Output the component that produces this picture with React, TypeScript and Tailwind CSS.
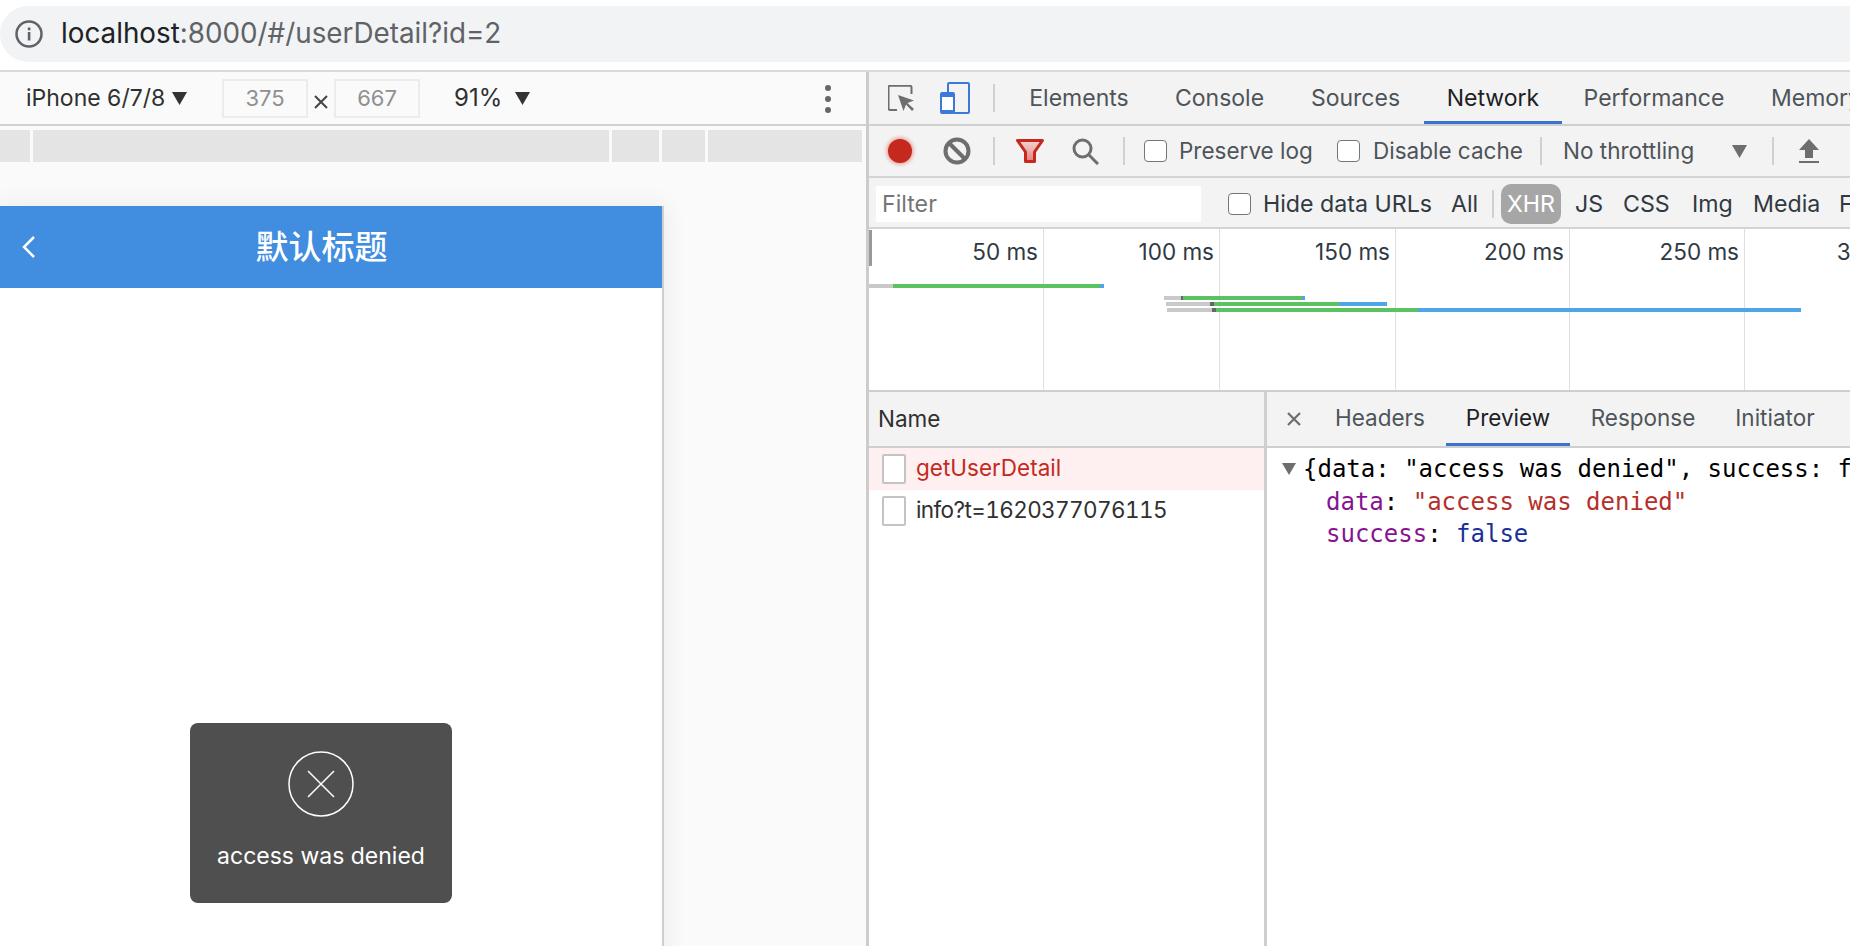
const tabs = [
  { label: "Elements", width: "w-[146px]" },
  { label: "Console", width: "w-[135px]" },
  { label: "Sources", width: "w-[137px]" },
  { label: "Network", width: "w-[138px]", active: true },
  { label: "Performance", width: "w-[184px]" },
  { label: "Memory", width: "w-[140px]" },
];

const detailTabs = [
  { label: "Headers", width: "w-[132px]" },
  { label: "Preview", width: "w-[124px]", active: true },
  { label: "Response", width: "w-[146px]" },
  { label: "Initiator", width: "w-[118px]" },
];

const ticks = [
  { label: "50 ms", width: "w-[175px]" },
  { label: "100 ms", width: "w-[176px]" },
  { label: "150 ms", width: "w-[176px]" },
  { label: "200 ms", width: "w-[174px]" },
  { label: "250 ms", width: "w-[175px]" },
  { label: "300 ms", width: "w-[178px]" },
];

function Sep() {
  return <div className="h-[28px] w-[2px] shrink-0 bg-[#d0d0d0]" />;
}

function Check({ className }: { className: string }) {
  return (
    <div
      className={`h-[22px] w-[23px] shrink-0 rounded-[4px] border-[1.5px] border-[#767676] bg-white ${className}`}
    />
  );
}

function Caret({ className }: { className: string }) {
  return (
    <svg className={`shrink-0 ${className}`} width="15" height="13" viewBox="0 0 15 13">
      <path d="M0 0h15L7.500 13z" fill="currentColor" />
    </svg>
  );
}

function FileIcon() {
  return <div className="h-[30px] w-[24px] shrink-0 rounded-[2px] border-2 border-[#c4c4c4] bg-white" />;
}

function Waterfall() {
  return (
    <svg className="absolute left-0 top-0" width="981" height="161" viewBox="869 229 981 161">
      <rect x="869" y="230" width="3" height="36" fill="#999999" />
      <rect x="869" y="284" width="24" height="4" fill="#c9c9c9" />
      <rect x="893" y="284" width="207" height="4" fill="#5cc160" />
      <rect x="1100" y="284" width="4" height="4" fill="#4ea6e8" />
      <rect x="1164" y="296" width="17" height="4" fill="#c9c9c9" />
      <rect x="1181" y="296" width="2" height="4" fill="#666666" />
      <rect x="1183" y="296" width="119" height="4" fill="#5cc160" />
      <rect x="1302" y="296" width="3" height="4" fill="#4ea6e8" />
      <rect x="1166" y="302" width="44" height="4" fill="#c9c9c9" />
      <rect x="1210" y="302" width="4" height="4" fill="#666666" />
      <rect x="1214" y="302" width="125" height="4" fill="#5cc160" />
      <rect x="1339" y="302" width="48" height="4" fill="#4ea6e8" />
      <rect x="1167" y="308" width="45" height="4" fill="#c9c9c9" />
      <rect x="1212" y="308" width="4" height="4" fill="#666666" />
      <rect x="1216" y="308" width="202" height="4" fill="#5cc160" />
      <rect x="1418" y="308" width="383" height="4" fill="#4ea6e8" />
    </svg>
  );
}

export default function App() {
  return (
    <div className="flex h-[946px] w-[1850px] flex-col overflow-hidden bg-white font-['Inter','Noto_Sans_CJK_SC',sans-serif]">
      {/* address bar */}
      <div className="h-[70px] shrink-0 pt-[6px]">
        <div className="flex h-[56px] items-center rounded-l-[28px] bg-[#f1f3f4] pl-[15px] text-[27.800px] text-[#5f6368]">
          <svg width="28" height="28" viewBox="0 0 28 28" className="shrink-0">
            <circle cx="14" cy="14" r="12.500" fill="none" stroke="#5f6368" strokeWidth="2.500" />
            <rect x="12.800" y="12" width="2.600" height="8.500" fill="#5f6368" />
            <rect x="12.800" y="7.500" width="2.600" height="2.800" fill="#5f6368" />
          </svg>
          <span className="ml-[18px]">
            <span className="text-[#202124]">localhost</span>:8000/#/userDetail?id=2
          </span>
        </div>
      </div>
      <div className="h-[2px] shrink-0 bg-[#d9d9db]" />

      <div className="flex min-h-0 flex-1">
        {/* device emulation pane */}
        <div className="flex w-[866px] shrink-0 flex-col bg-[#fafafa]">
          <div className="flex h-[52px] shrink-0 items-center text-[23px] text-[#303030]">
            <span className="ml-[26px] w-[137px] whitespace-nowrap">iPhone 6/7/8</span>
            <Caret className="ml-[9px] text-[#333333]" />
            <div className="ml-[35px] flex h-[39px] w-[86px] items-center justify-center border-2 border-[#ececec] text-[22px] text-[#909090]">
              375
            </div>
            <svg className="ml-[6px] mt-[8px] shrink-0" width="14" height="14" viewBox="0 0 14 14">
              <path d="M1 1l12 12M13 1L1 13" stroke="#444444" strokeWidth="2" fill="none" />
            </svg>
            <div className="ml-[6px] flex h-[39px] w-[86px] items-center justify-center border-2 border-[#ececec] text-[22px] text-[#909090]">
              667
            </div>
            <span className="ml-[34px] w-[50px] text-[24px]">91%</span>
            <Caret className="ml-[11px] text-[#333333]" />
            <div className="ml-[295px] mt-[2px] flex flex-col gap-[5px]">
              <div className="size-[6px] rounded-full bg-[#666666]" />
              <div className="size-[6px] rounded-full bg-[#666666]" />
              <div className="size-[6px] rounded-full bg-[#666666]" />
            </div>
          </div>
          <div className="h-[2px] shrink-0 bg-[#d0d0d0]" />
          <div className="mt-[4px] flex h-[32px] w-[862px] shrink-0 gap-[3px]">
            <div className="w-[30px] bg-[#e4e4e4]" />
            <div className="w-[576px] bg-[#e4e4e4]" />
            <div className="w-[47px] bg-[#e4e4e4]" />
            <div className="w-[43px] bg-[#e4e4e4]" />
            <div className="flex-1 bg-[#e4e4e4]" />
          </div>
          <div className="min-h-0 flex-1 overflow-hidden pt-[44px]">
            <div className="relative h-[800px] w-[664px] border-r-2 border-[#cfcfcf] bg-white shadow-[0_0_24px_rgba(0,0,0,0.07)]">
              <div className="relative flex h-[82px] items-center justify-center bg-[#418de0] pb-[2px] pr-[19px] text-[33px] font-medium text-white">
                <svg className="absolute left-[21px] top-[30px]" width="16" height="22" viewBox="0 0 16 22">
                  <path d="M13 1L3 11l10 10" fill="none" stroke="#ffffff" strokeWidth="2.500" />
                </svg>
                <span className="font-['Noto_Sans_CJK_SC',sans-serif]">默认标题</span>
              </div>
              <div className="absolute left-[190px] top-[517px] flex h-[180px] w-[262px] flex-col items-center rounded-[8px] bg-[#4f4f4f] text-[23px] text-white">
                <svg className="mt-[28px]" width="66" height="66" viewBox="0 0 66 66">
                  <circle cx="33" cy="33" r="32" fill="none" stroke="#ffffff" strokeWidth="1.500" />
                  <path d="M20 20l26 26M46 20L20 46" fill="none" stroke="#ffffff" strokeWidth="1.500" />
                </svg>
                <span className="mt-[25px] leading-[28px] whitespace-nowrap">access was denied</span>
              </div>
            </div>
          </div>
        </div>

        <div className="w-[3px] shrink-0 bg-[#cccccc]" />

        {/* devtools */}
        <div className="flex min-w-0 flex-1 flex-col text-[22.500px] text-[#303942]">
          <div className="flex h-[54px] shrink-0 items-center overflow-hidden border-b-2 border-[#cfcfcf] bg-[#f3f3f3] text-[23px]">
            <svg className="ml-[19px] shrink-0" width="26" height="26" viewBox="0 0 26 26">
              <path d="M9 25H2a1.500 1.500 0 0 1-1.500-1.500V2A1.500 1.500 0 0 1 2 .8h20A1.500 1.500 0 0 1 23.500 2v7" fill="none" stroke="#6e6e6e" strokeWidth="2" />
              <path d="M10 10l16 5.500-6.500 2.500 6.500 6-2 2-6-6.500-2.500 6.500z" fill="#6e6e6e" />
            </svg>
            <svg className="ml-[26px] shrink-0" width="30" height="32" viewBox="0 0 30 32">
              <path d="M8 10V2a1 1 0 0 1 1-1h19a1 1 0 0 1 1 1v28a1 1 0 0 1-1 1H14" fill="none" stroke="#3d7ad8" strokeWidth="2" />
              <rect x="1" y="11" width="13" height="20" rx="1" fill="#ffffff" stroke="#3d7ad8" strokeWidth="2" />
              <rect x="1" y="11" width="13" height="4" fill="#3d7ad8" />
              <rect x="1" y="28" width="13" height="3" fill="#3d7ad8" />
            </svg>
            <div className="ml-[23px]">
              <Sep />
            </div>
            <div className="ml-[11px] flex h-full shrink-0">
              {tabs.map((tab) => (
                <div
                  key={tab.label}
                  className={`flex shrink-0 items-center justify-center ${tab.width} ${
                    tab.active ? "border-b-[3px] border-[#3d73d0] pt-[3px] text-[#202124]" : "text-[#4e5459]"
                  }`}
                >
                  {tab.label}
                </div>
              ))}
            </div>
          </div>

          <div className="flex h-[52px] shrink-0 items-center border-b-2 border-[#d4d4d4] bg-[#f3f3f3] text-[#4e5459]">
            <svg className="ml-[13px] shrink-0" width="36" height="36" viewBox="0 0 36 36">
              <defs>
                <radialGradient id="recordGlow">
                  <stop offset="60%" stopColor="#e07a70" stopOpacity="0.8" />
                  <stop offset="100%" stopColor="#f3f3f3" stopOpacity="0" />
                </radialGradient>
              </defs>
              <circle cx="18" cy="18" r="18" fill="url(#recordGlow)" />
              <circle cx="18" cy="18" r="12" fill="#c5291d" />
            </svg>
            <svg className="ml-[25px] shrink-0" width="28" height="28" viewBox="0 0 28 28">
              <circle cx="14" cy="14" r="11.500" fill="none" stroke="#6e6e6e" strokeWidth="4" />
              <path d="M6 6l16 16" stroke="#6e6e6e" strokeWidth="4" />
            </svg>
            <div className="ml-[22px]">
              <Sep />
            </div>
            <svg className="ml-[21px] shrink-0" width="28" height="24" viewBox="0 0 28 24">
              <defs>
                <linearGradient id="funnelFill" x1="0" y1="0" x2="0" y2="1">
                  <stop offset="0%" stopColor="#f6d5d2" />
                  <stop offset="100%" stopColor="#e4807a" />
                </linearGradient>
              </defs>
              <path d="M1.500 1.500h25L18.500 13v9.500h-9V13z" fill="url(#funnelFill)" stroke="#c5291d" strokeWidth="3" strokeLinejoin="round" />
            </svg>
            <svg className="ml-[28px] shrink-0" width="27" height="27" viewBox="0 0 27 27">
              <circle cx="10.500" cy="10.500" r="8.500" fill="none" stroke="#6e6e6e" strokeWidth="3" />
              <path d="M17 17l9 9" stroke="#6e6e6e" strokeWidth="3" />
            </svg>
            <div className="ml-[24px]">
              <Sep />
            </div>
            <Check className="ml-[19px]" />
            <span className="ml-[12px] w-[134px] shrink-0 whitespace-nowrap">Preserve log</span>
            <Check className="ml-[24px]" />
            <span className="ml-[13px] w-[149px] shrink-0 whitespace-nowrap">Disable cache</span>
            <div className="ml-[18px]">
              <Sep />
            </div>
            <span className="ml-[21px] w-[132px] shrink-0 whitespace-nowrap">No throttling</span>
            <Caret className="ml-[37px] text-[#6e6e6e]" />
            <div className="ml-[25px]">
              <Sep />
            </div>
            <svg className="ml-[25px] shrink-0" width="20" height="24" viewBox="0 0 20 24">
              <path d="M10 0l10 11h-6v8H6v-8H0z" fill="#6e6e6e" />
              <rect x="0" y="22" width="20" height="2" fill="#6e6e6e" />
            </svg>
          </div>

          <div className="flex h-[51px] shrink-0 items-center overflow-hidden border-b-[2px] border-[#d4d4d4] bg-[#f3f3f3] pt-[3px] text-[23.200px]">
            <div className="ml-[7px] flex h-[36px] w-[325px] shrink-0 items-center bg-white pl-[6px] text-[#757575]">
              Filter
            </div>
            <Check className="ml-[27px]" />
            <span className="ml-[12px] w-[170px] shrink-0 whitespace-nowrap">Hide data URLs</span>
            <span className="ml-[18px] w-[26px] shrink-0">All</span>
            <div className="ml-[15px] h-[28px] w-[2px] shrink-0 bg-[#d0d0d0]" />
            <div className="ml-[7px] flex h-[40px] w-[60px] shrink-0 items-center justify-center rounded-[10px] bg-[#a6a6a6] text-white">
              XHR
            </div>
            <span className="ml-[14px] w-[28px] shrink-0">JS</span>
            <span className="ml-[20px] w-[48px] shrink-0">CSS</span>
            <span className="ml-[21px] w-[40px] shrink-0">Img</span>
            <span className="ml-[21px] w-[66px] shrink-0">Media</span>
            <span className="ml-[20px] shrink-0">Font</span>
          </div>

          {/* overview */}
          <div className="relative flex h-[163px] shrink-0 overflow-hidden border-b-2 border-[#cfcfcf] bg-white">
            {ticks.map((tick) => (
              <div
                key={tick.label}
                className={`shrink-0 border-r border-[#dfdfdf] pr-[5px] pt-[9px] text-right whitespace-nowrap leading-[28px] ${tick.width}`}
              >
                {tick.label}
              </div>
            ))}
            <Waterfall />
          </div>

          <div className="flex min-h-0 flex-1">
            <div className="w-[395px] shrink-0">
              <div className="flex h-[56px] items-center border-b-2 border-[#cfcfcf] bg-[#f3f3f3] pl-[9px] text-[#303030]">
                Name
              </div>
              <div className="flex h-[42px] items-center gap-[10px] bg-[#fef0f0] pl-[13px] text-[#c5291d]">
                <FileIcon />
                <span className="mb-[3px]">getUserDetail</span>
              </div>
              <div className="flex h-[42px] items-center gap-[10px] pl-[13px] text-[#303030]">
                <FileIcon />
                <span className="mb-[2px] whitespace-nowrap tabular-nums tracking-[-0.6px]">info?t=1620377076115</span>
              </div>
            </div>
            <div className="w-[3px] shrink-0 bg-[#cfcfcf]" />
            <div className="min-w-0 flex-1">
              <div className="flex h-[56px] items-center border-b-2 border-[#cfcfcf] bg-[#f3f3f3]">
                <svg className="ml-[20px] mr-[13px] shrink-0" width="14" height="14" viewBox="0 0 14 14">
                  <path d="M1 1l12 12M13 1L1 13" stroke="#6e6e6e" strokeWidth="2.200" fill="none" />
                </svg>
                {detailTabs.map((tab) => (
                  <div
                    key={tab.label}
                    className={`flex h-full shrink-0 items-center justify-center pb-[2px] ${tab.width} ${
                      tab.active ? "border-b-[3px] border-[#3d73d0] pt-[3px] text-[#202124]" : "text-[#4e5459]"
                    }`}
                  >
                    {tab.label}
                  </div>
                ))}
              </div>
              <div className="overflow-hidden pt-[5px] font-['DejaVu_Sans_Mono',monospace] text-[24px] leading-[32px] whitespace-nowrap text-black">
                <div className="flex items-center">
                  <svg className="ml-[15px] mr-[7px] shrink-0" width="14" height="12" viewBox="0 0 14 12">
                    <path d="M0 0h14L7 12z" fill="#6e6e6e" />
                  </svg>
                  <span>{'{data: "access was denied", success: false}'}</span>
                </div>
                <div className="pl-[59px] pt-[1px]">
                  <span className="text-[#881391]">data</span>: <span className="text-[#b5302a]">"access was denied"</span>
                </div>
                <div className="pl-[59px]">
                  <span className="text-[#881391]">success</span>: <span className="text-[#1a2f9a]">false</span>
                </div>
              </div>
            </div>
          </div>
        </div>
      </div>
    </div>
  );
}
